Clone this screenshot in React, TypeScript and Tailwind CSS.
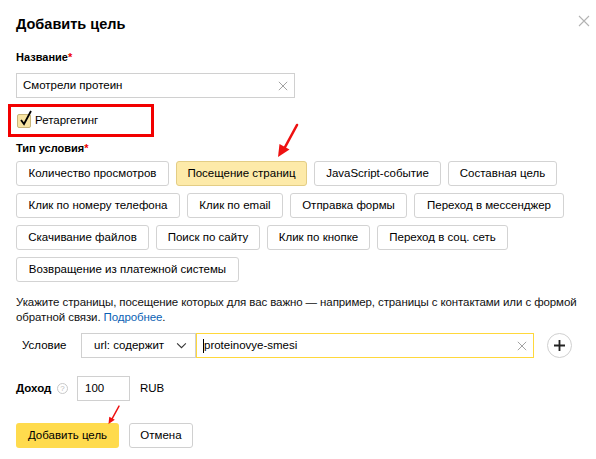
import React from "react";

// widths taken from the reference layout
const types: [string, number][][] = [
  [["Количество просмотров", 153], ["Посещение страниц", 131], ["JavaScript-событие", 127], ["Составная цель", 109]],
  [["Клик по номеру телефона", 164], ["Клик по email", 96], ["Отправка формы", 117], ["Переход в мессенджер", 150]],
  [["Скачивание файлов", 133], ["Поиск по сайту", 104], ["Клик по кнопке", 103], ["Переход в соц. сеть", 131]],
  [["Возвращение из платежной системы", 223]],
];

function ClearIcon({ className }: { className?: string }) {
  return (
    <svg viewBox="0 0 12 12" className={className} fill="none" stroke="currentColor" strokeWidth="1.1">
      <path d="M1 1L11 11M11 1L1 11" />
    </svg>
  );
}

function RedArrow({ className }: { className?: string }) {
  return (
    <svg viewBox="0 0 24 36" className={className}>
      <path d="M21 2L8 26" stroke="#ee1111" strokeWidth="2.6" strokeLinecap="round" />
      <path d="M2 34L3.5 21L13.5 26.5Z" fill="#ee1111" />
    </svg>
  );
}

export default function App() {
  return (
    <div
      className="relative w-[596px] h-[459px] bg-white px-4 text-[11.5px] text-[#000] overflow-hidden"
      style={{ fontFamily: '"Liberation Sans", Arial, sans-serif' }}
    >
      {/* Close */}
      <button className="absolute right-[6px] top-[15px] text-[#b3b3b3]">
        <ClearIcon className="w-[12px] h-[12px]" />
      </button>

      <h1 className="pt-[12px] text-[14.5px] leading-[24px] font-bold">Добавить цель</h1>

      <div className="mt-[13px] text-[11px] font-bold leading-4">
        Название<span className="text-[#e00]">*</span>
      </div>

      <div className="mt-[8px] w-[279px] h-[25px] border border-[#d0d0d0] flex items-center pl-[6px] pr-[6px]">
        <span className="flex-1">Смотрели протеин</span>
        <ClearIcon className="w-[10px] h-[10px] text-[#999]" />
      </div>

      {/* Retargeting */}
      <div className="mt-[6px] -ml-2 w-[146px] h-[33px] border-[3px] border-[#f20000] flex items-center pl-[6px] gap-[4px]">
        <div className="relative w-[14px] h-[14px] rounded-[2px] bg-[#f7e4a3] border border-[#c8b57a]">
          <svg viewBox="0 0 14 16" className="absolute left-[1px] -top-[5px] w-[14px] h-[16px]" fill="none" stroke="#000" strokeWidth="1.8">
            <path d="M2 10L5 14L12 1" />
          </svg>
        </div>
        <span>Ретаргетинг</span>
      </div>

      <div className="mt-[3px] text-[11px] font-bold leading-4">
        Тип условия<span className="text-[#e00]">*</span>
      </div>

      <div className="mt-[5px] flex flex-col gap-y-[7px]">
        {types.map((row, i) => (
          <div key={i} className="flex gap-[7px]">
            {row.map(([t, w]) => (
              <button
                key={t}
                style={{ width: w }}
                className={
                  t === "Посещение страниц"
                    ? "h-[25px] rounded-[3px] border border-[#e3cd85] bg-[#fdeaa9] whitespace-nowrap"
                    : "h-[25px] rounded-[3px] border border-[#d3d3d3] bg-white whitespace-nowrap"
                }
              >
                {t}
              </button>
            ))}
          </div>
        ))}
      </div>

      <p className="mt-[13px] leading-[15px] text-[#111] tracking-[-0.1px] whitespace-nowrap">
        Укажите страницы, посещение которых для вас важно — например, страницы с контактами или с формой
        <br />
        обратной связи. <span className="text-[#0a5fb4]">Подробнее</span>.
      </p>

      {/* Condition */}
      <div className="mt-[8px] flex items-center">
        <span className="w-[65px] pl-[6px]">Условие</span>
        <div className="w-[115px] h-[25px] border border-[#d0d0d0] flex items-center pl-[12px] pr-[8px]">
          <span className="flex-1">url: содержит</span>
          <svg viewBox="0 0 12 8" className="w-[11px] h-[7px]" fill="none" stroke="#333" strokeWidth="1.2">
            <path d="M1 1.5L6 6.5L11 1.5" />
          </svg>
        </div>
        <div className="w-[338px] h-[25px] border border-[#ffd83b] flex items-center pl-[6px] pr-[6px]">
          <span className="w-px h-[14px] bg-black" />
          <span className="flex-1">proteinovye-smesi</span>
          <ClearIcon className="w-[10px] h-[10px] text-[#999]" />
        </div>
        <button className="ml-[13px] w-[25px] h-[25px] rounded-full border border-[#d0d0d0] flex items-center justify-center">
          <svg viewBox="0 0 12 12" className="w-[11px] h-[11px]" stroke="#222" strokeWidth="2">
            <path d="M6 0V12M0 6H12" />
          </svg>
        </button>
      </div>

      {/* Income */}
      <div className="mt-[18px] flex items-center">
        <span className="w-[38px] text-[11.5px] font-bold">Доход</span>
        <span className="ml-[3px] w-[11px] h-[11px] rounded-full border border-[#c8c8c8] text-[#bbb] text-[8px] leading-[9px] text-center">?</span>
        <div className="ml-[9px] w-[53px] h-[25px] border border-[#d0d0d0] flex items-center pl-[7px]">100</div>
        <span className="ml-[10px]">RUB</span>
      </div>

      {/* Actions */}
      <div className="mt-[22px] flex gap-[10px]">
        <button className="h-[25px] w-[103px] rounded-[3px] bg-[#ffdb4d]">Добавить цель</button>
        <button className="h-[25px] w-[64px] rounded-[3px] border border-[#d0d0d0] bg-white">Отмена</button>
      </div>

      {/* annotation arrows */}
      <RedArrow className="absolute left-[276px] top-[123px] w-[24px] h-[36px]" />
      <RedArrow className="absolute left-[105px] top-[405px] w-[18px] h-[20px]" />
    </div>
  );
}
